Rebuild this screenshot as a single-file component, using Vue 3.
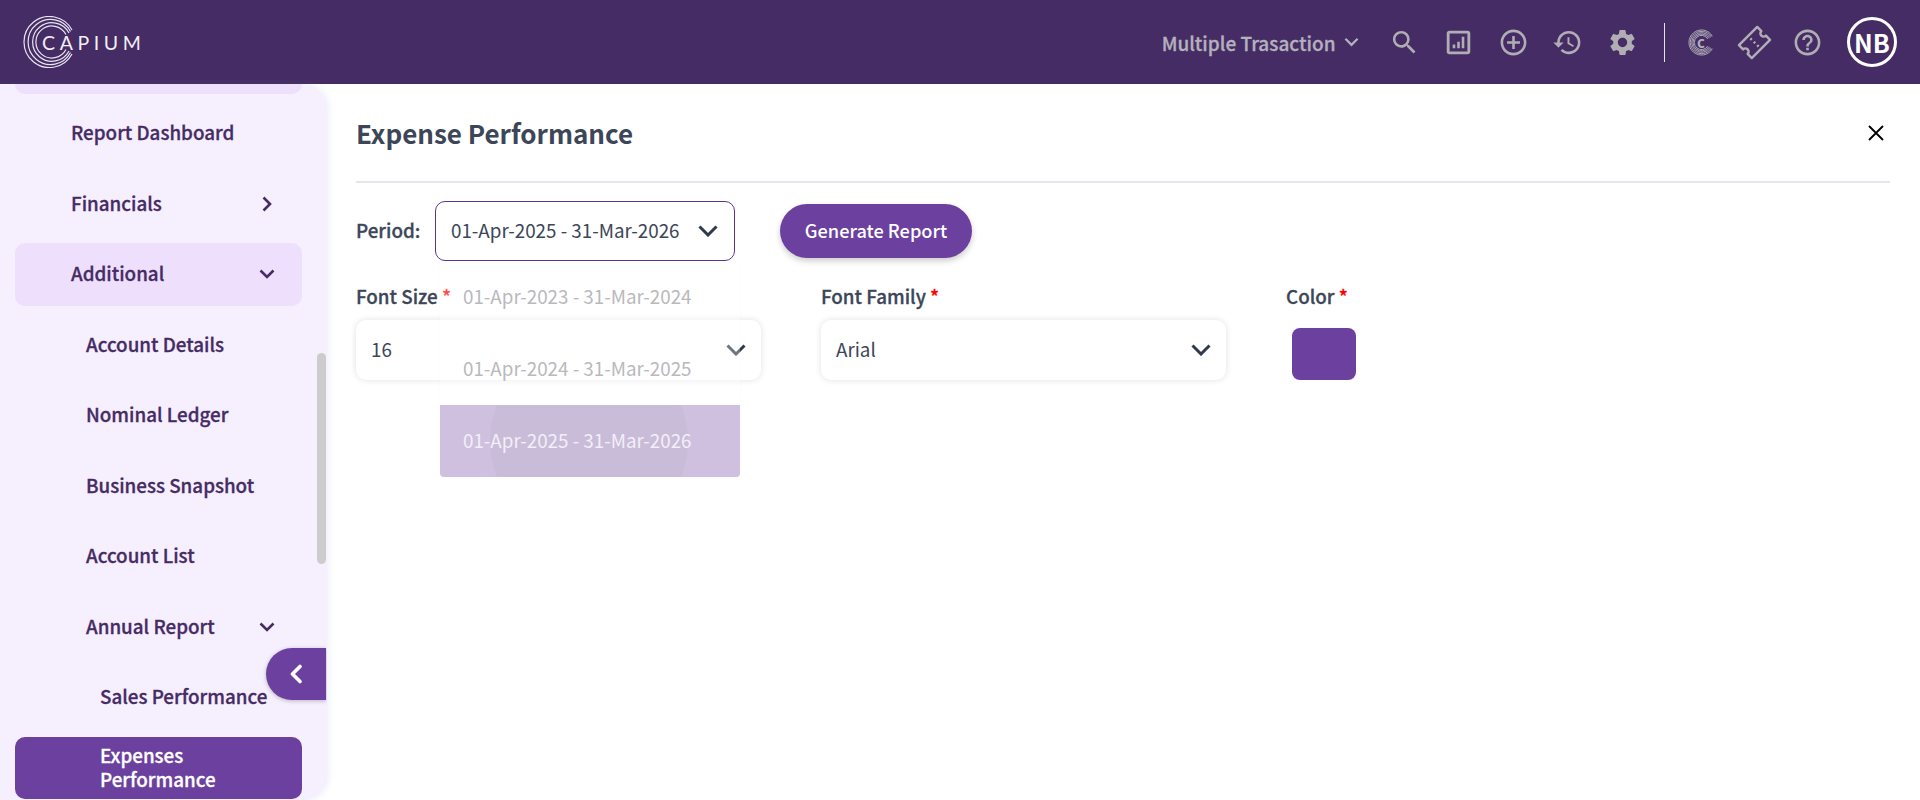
<script setup>
const periods = [
  { label: '01-Apr-2023 - 31-Mar-2024' },
  { label: '01-Apr-2024 - 31-Mar-2025' },
  { label: '01-Apr-2025 - 31-Mar-2026', selected: true }
]

const menu = [
  { label: 'Report Dashboard', level: 0 },
  { label: 'Financials', level: 0, arrow: 'right' },
  { label: 'Additional', level: 0, arrow: 'down', open: true },
  { label: 'Account Details', level: 1 },
  { label: 'Nominal Ledger', level: 1 },
  { label: 'Business Snapshot', level: 1 },
  { label: 'Account List', level: 1 },
  { label: 'Annual Report', level: 1, arrow: 'down' },
  { label: 'Sales Performance', level: 2 },
  { label: 'Expenses Performance', level: 2, active: true }
]
</script>

<template>
  <div class="page">
    <header class="topbar">
      <div class="logo">
        <svg class="logo-rings" viewBox="0 0 52 52" fill="none" stroke="#e9e3f0" stroke-width="1.2">
          <path d="M49 14A25.500 25.500 0 1 0 49 38" />
          <path d="M47.500 15.500A22.500 22.500 0 1 0 47.500 36.500" />
          <path d="M46 17A19.300 19.300 0 1 0 46 35" />
          <path d="M43 18.500A16 16 0 1 0 43 33.500" />
        </svg>
        <span class="logo-text">CAPIUM</span>
      </div>
      <div class="top-actions">
        <div class="client-switch">
          <span>Multiple Trasaction</span>
          <svg class="tool-chevron" viewBox="0 0 16 10" fill="none" stroke="#b5b0bd" stroke-width="2.400"><path d="M1.500 1.500 8 8l6.500-6.500" /></svg>
        </div>
        <svg class="tool" viewBox="0 0 24 24" fill="#b0adb5"><path d="M15.500 14h-.79l-.28-.27A6.470 6.470 0 0 0 16 9.500 6.500 6.500 0 1 0 9.500 16c1.610 0 3.090-.59 4.230-1.570l.27.28v.79l5 4.990L20.490 19l-4.990-5zm-6 0C7.010 14 5 11.990 5 9.500S7.010 5 9.500 5 14 7.010 14 9.500 11.990 14 9.500 14z" /></svg>
        <svg class="tool" viewBox="0 0 24 24" fill="none" stroke="#b0adb5"><rect x="4" y="4" width="16" height="16" rx="1" stroke-width="2.200" /><path d="M8.500 13.500v3M12 11.500v5M15.500 7.500v9" stroke-width="2" /></svg>
        <svg class="tool" viewBox="0 0 24 24" fill="#b0adb5"><path d="M13 7h-2v4H7v2h4v4h2v-4h4v-2h-4V7zm-1-5C6.480 2 2 6.480 2 12s4.480 10 10 10 10-4.480 10-10S17.520 2 12 2zm0 18c-4.410 0-8-3.590-8-8s3.590-8 8-8 8 3.590 8 8-3.590 8-8 8z" /></svg>
        <svg class="tool" viewBox="0 0 24 24" fill="#b0adb5"><path d="M13 3a9 9 0 0 0-9 9H1l3.890 3.890.07.140L9 12H6c0-3.870 3.130-7 7-7s7 3.130 7 7-3.130 7-7 7c-1.930 0-3.680-.79-4.940-2.060l-1.420 1.420A8.954 8.954 0 0 0 13 21a9 9 0 0 0 0-18zm-1 5v5l4.280 2.540.72-1.210-3.500-2.080V8H12z" /></svg>
        <svg class="tool gear" viewBox="0 0 24 24" fill="#b0adb5"><path d="M19.140 12.940c.04-.3.060-.61.060-.94 0-.32-.02-.64-.07-.94l2.030-1.580a.49.49 0 0 0 .12-.61l-1.920-3.320a.488.488 0 0 0-.59-.22l-2.390.96c-.5-.38-1.030-.7-1.620-.94l-.36-2.540a.484.484 0 0 0-.48-.41h-3.840c-.24 0-.43.170-.47.410l-.36 2.540c-.59.240-1.130.570-1.620.940l-2.390-.96c-.22-.08-.47 0-.59.220L2.740 8.870c-.12.210-.08.470.120.610l2.030 1.580c-.05.300-.09.630-.09.940s.02.640.07.940l-2.030 1.580a.49.49 0 0 0-.12.610l1.920 3.320c.12.220.37.290.59.220l2.390-.96c.5.380 1.030.7 1.620.940l.36 2.540c.05.240.24.410.48.410h3.840c.24 0 .44-.17.470-.41l.36-2.540c.59-.24 1.130-.56 1.620-.94l2.390.96c.22.080.47 0 .59-.22l1.920-3.320c.12-.22.070-.47-.12-.61l-2.010-1.580zM12 15.600A3.610 3.610 0 0 1 8.400 12c0-1.980 1.620-3.600 3.600-3.600s3.600 1.620 3.600 3.600-1.620 3.600-3.600 3.600z" /></svg>
        <span class="top-divider"></span>
        <div class="brand-mark">
          <svg viewBox="0 0 28 28" fill="none" stroke="#b0adb5" stroke-width="1">
            <path d="M25.260 7.500A13 13 0 1 0 25.260 20.500" />
            <path d="M24.050 8.200A11.600 11.600 0 1 0 24.050 19.800" />
            <path d="M22.830 8.900A10.200 10.200 0 1 0 22.830 19.100" />
            <path d="M21.620 9.600A8.800 8.800 0 1 0 21.620 18.400" />
            <path d="M20.410 10.300A7.400 7.400 0 1 0 20.410 17.700" />
          </svg>
          <span>c</span>
        </div>
        <svg class="tool ticket" viewBox="0 0 24 24" fill="none" stroke="#b0adb5" stroke-width="1.900"><path d="M2 5h20v4.500a2.500 2.500 0 0 0 0 5V19H2v-4.500a2.500 2.500 0 0 0 0-5z" stroke-linejoin="round" /><path d="M12 7.500v1.500M12 11.200v1.600M12 15v1.500" /></svg>
        <svg class="tool" viewBox="0 0 24 24" fill="#b0adb5"><path d="M11 18h2v-2h-2v2zm1-16C6.480 2 2 6.480 2 12s4.480 10 10 10 10-4.480 10-10S17.520 2 12 2zm0 18c-4.410 0-8-3.590-8-8s3.590-8 8-8 8 3.590 8 8-3.590 8-8 8zm0-14c-2.210 0-4 1.790-4 4h2c0-1.100.9-2 2-2s2 .9 2 2c0 2-3 1.750-3 5h2c0-2.250 3-2.500 3-5 0-2.210-1.790-4-4-4z" /></svg>
        <div class="avatar">NB</div>
      </div>
    </header>

    <div class="body">
      <aside class="sidebar">
        <nav class="nav">
          <div class="nav-sliver"></div>
          <a
            v-for="item in menu"
            :key="item.label"
            class="nav-item"
            :class="['level-' + item.level, { open: item.open, active: item.active }]"
          >
            <span class="nav-label">{{ item.label }}</span>
            <svg v-if="item.arrow === 'right'" class="nav-arrow" viewBox="0 0 16 16" fill="none" stroke="#452c64" stroke-width="2.600"><path d="M4.500 1.500 11 8l-6.500 6.500" /></svg>
            <svg v-if="item.arrow === 'down'" class="nav-arrow" viewBox="0 0 16 16" fill="none" stroke="#452c64" stroke-width="2.600"><path d="M1.500 4.500 8 11l6.500-6.500" /></svg>
          </a>
        </nav>
        <div class="nav-scrollbar"></div>
        <button class="collapse">
          <svg viewBox="0 0 14 20" fill="none" stroke="#fff" stroke-width="3.600" stroke-linejoin="round" stroke-linecap="round"><path d="M11 2.500 3.500 10l7.500 7.500" /></svg>
        </button>
      </aside>

      <main class="content">
        <div class="title-row">
          <h1>Expense Performance</h1>
          <svg class="close" viewBox="0 0 16 16" fill="none" stroke="#000" stroke-width="1.800"><path d="M1 1l14 14M15 1 1 15" /></svg>
        </div>

        <div class="period-row">
          <label class="period-label">Period:</label>
          <div class="period-wrap">
            <div class="period-select">
              <span class="select-text">01-Apr-2025 - 31-Mar-2026</span>
              <svg class="select-chevron" viewBox="0 0 20 12" fill="none" stroke="#2f3a4d" stroke-width="3"><path d="M1.500 1.500 10 10l8.500-8.500" /></svg>
            </div>
            <ul class="period-panel">
              <li v-for="p in periods" :key="p.label" :class="{ selected: p.selected }">
                <span class="ripple" v-if="p.selected"></span>
                <span class="option-text">{{ p.label }}</span>
              </li>
            </ul>
          </div>
          <button class="generate">Generate Report</button>
        </div>

        <div class="fields">
          <div class="field">
            <label>Font Size <em>*</em></label>
            <div class="field-select">
              <span class="select-text">16</span>
              <svg class="select-chevron" viewBox="0 0 20 12" fill="none" stroke="#2f3a4d" stroke-width="3"><path d="M1.500 1.500 10 10l8.500-8.500" /></svg>
            </div>
          </div>
          <div class="field">
            <label>Font Family <em>*</em></label>
            <div class="field-select">
              <span class="select-text">Arial</span>
              <svg class="select-chevron" viewBox="0 0 20 12" fill="none" stroke="#2f3a4d" stroke-width="3"><path d="M1.500 1.500 10 10l8.500-8.500" /></svg>
            </div>
          </div>
          <div class="field color-field">
            <label>Color <em>*</em></label>
            <div class="swatch"></div>
          </div>
        </div>
      </main>
    </div>
  </div>
</template>

<style>
html, body {
  margin: 0;
  background: #fff;
}
</style>

<style scoped>
.page {
  width: 1920px;
  height: 800px;
  overflow: hidden;
  display: flex;
  flex-direction: column;
  font-family: "Noto Sans CJK SC", "Noto Sans", sans-serif;
  color: #3c4658;
}

.topbar {
  height: 84px;
  flex: none;
  background: #452c64;
  display: flex;
  align-items: center;
  justify-content: space-between;
  padding: 0 23px 0 23px;
}

.logo {
  display: flex;
  align-items: center;
  width: 130px;
  height: 52px;
}

.logo-rings {
  width: 52px;
  height: 52px;
  flex: none;
}

.logo-text {
  margin-left: -33px;
  font-family: "Lato", sans-serif;
  font-size: 19.500px;
  letter-spacing: 4.600px;
  color: #f2eef6;
}

.top-actions {
  display: flex;
  align-items: center;
}

.client-switch {
  display: flex;
  align-items: center;
  gap: 8px;
  font-size: 19px;
  font-weight: 500;
  -webkit-text-stroke: 0.3px currentColor;
  color: #b5b0bd;
  margin-right: 30px;
}

.tool-chevron {
  width: 15px;
  height: 10px;
}

.tool {
  width: 31px;
  height: 31px;
  margin-right: 23.500px;
}

.gear {
  margin-right: 26px;
}

.ticket {
  transform: rotate(-45deg);
  margin-right: 22px;
}

.top-divider {
  width: 1px;
  height: 39px;
  background: #e6e2ea;
  margin-right: 23px;
}

.brand-mark {
  width: 27px;
  height: 27px;
  margin-right: 24px;
  position: relative;
  display: flex;
  align-items: center;
  justify-content: center;
}

.brand-mark svg {
  position: absolute;
  inset: 0;
}

.brand-mark span {
  font-size: 15px;
  font-weight: 700;
  color: #b0adb5;
  line-height: 1;
  margin-bottom: 2px;
}

.avatar {
  width: 50px;
  height: 50px;
  box-sizing: border-box;
  margin-left: 1px;
  border: 3px solid #fff;
  border-radius: 50%;
  display: flex;
  align-items: center;
  justify-content: center;
  font-size: 25px;
  font-weight: 700;
  color: #fff;
}

.body {
  flex: 1;
  display: flex;
  min-height: 0;
}

.sidebar {
  position: relative;
  width: 327px;
  flex: none;
  background: #f6effe;
  border-radius: 0 24px 24px 0;
  box-shadow: 2px 0 6px rgba(110, 130, 200, 0.12);
  overflow: hidden;
}

.nav {
  display: flex;
  flex-direction: column;
  gap: 8px;
  padding: 0 25px 0 15px;
}

.nav-sliver {
  height: 10px;
  background: #eee0fd;
  border-radius: 0 0 10px 10px;
}

.nav-item {
  height: 62.500px;
  flex: none;
  border-radius: 10px;
  display: flex;
  align-items: center;
  justify-content: space-between;
  padding-right: 26px;
  font-size: 18.800px;
  font-weight: 500;
  -webkit-text-stroke: 0.3px currentColor;
  color: #452c64;
  line-height: 24px;
  box-sizing: border-box;
}

.nav-label {
  margin-bottom: 2px;
}

.level-0 { padding-left: 56px; }
.level-1 { padding-left: 71px; }
.level-2 { padding-left: 85px; padding-right: 0; }

.nav-item.open {
  background: #eee0fd;
}

.nav-item.active {
  background: #6c409e;
  color: #fff;
  padding-right: 110px;
}

.nav-arrow {
  width: 16px;
  height: 16px;
  flex: none;
  margin-right: 1px;
}

.nav-scrollbar {
  position: absolute;
  left: 317px;
  top: 269px;
  width: 9px;
  height: 211px;
  border-radius: 5px;
  background: #cccccc;
}

.collapse {
  position: absolute;
  left: 266px;
  top: 564px;
  width: 60px;
  height: 52px;
  padding: 0;
  border: 0;
  border-radius: 26px 0 0 26px;
  background: #6c409e;
  box-shadow: 0 1px 4px rgba(0, 0, 0, 0.25);
  display: flex;
  align-items: center;
  justify-content: center;
}

.collapse svg {
  width: 14px;
  height: 20px;
}

.content {
  flex: 1;
  min-width: 0;
  padding: 0 30px 0 29px;
}

.title-row {
  height: 99px;
  box-sizing: border-box;
  border-bottom: 2px solid #e6e5ec;
  display: flex;
  align-items: center;
  justify-content: space-between;
  padding: 0 6px 0 0;
}

h1 {
  margin: 0;
  font-size: 26px;
  font-weight: 600;
  color: #3c4658;
}

.close {
  width: 16px;
  height: 16px;
}

.period-row {
  display: flex;
  align-items: center;
  margin-top: 18px;
}

.period-label {
  width: 79px;
  font-size: 18.800px;
  font-weight: 500;
  -webkit-text-stroke: 0.3px currentColor;
  margin-bottom: 3px;
}

.period-wrap {
  position: relative;
}

.period-select {
  width: 300px;
  height: 60px;
  box-sizing: border-box;
  border: 1px solid #5f3393;
  border-radius: 10px;
  display: flex;
  align-items: center;
  justify-content: space-between;
  padding: 0 16px 0 15px;
  font-size: 18.800px;
  background: #fff;
}

.select-text {
  margin-bottom: 3px;
}

.select-chevron {
  width: 20px;
  height: 12px;
  flex: none;
}

.period-panel {
  position: absolute;
  z-index: 5;
  left: 5px;
  top: 60px;
  width: 300px;
  margin: 0;
  padding: 0;
  list-style: none;
  background: rgba(255, 255, 255, 0.3);
  border-radius: 0 0 5px 5px;
  box-shadow: 0 0 3px rgba(0, 0, 0, 0.03);
}

.period-panel li {
  position: relative;
  height: 72px;
  box-sizing: border-box;
  padding-left: 23px;
  display: flex;
  align-items: center;
  overflow: hidden;
  font-size: 18.800px;
  color: #b9b9bd;
}

.period-panel li.selected {
  background: #cfc0e0;
  color: #f3eef8;
  border-radius: 0 0 4px 4px;
}

.ripple {
  position: absolute;
  left: 50px;
  top: -63px;
  width: 198px;
  height: 198px;
  border-radius: 50%;
  background: rgba(120, 130, 120, 0.06);
}

.option-text {
  position: relative;
  margin-bottom: 3px;
}

.generate {
  margin-left: 45px;
  width: 192px;
  height: 54px;
  border: 0;
  border-radius: 27px;
  background: #6c409e;
  box-shadow: 0 3px 6px rgba(0, 0, 0, 0.2);
  color: #fff;
  font-family: inherit;
  font-size: 18.200px;
  font-weight: 500;
  padding: 0 0 3px;
}

.fields {
  display: flex;
  margin-top: 22px;
}

.field {
  width: 405px;
  margin-right: 60px;
}

.field label {
  display: block;
  height: 37px;
  line-height: 25px;
  font-size: 18.800px;
  font-weight: 500;
  -webkit-text-stroke: 0.3px currentColor;
  white-space: nowrap;
}

.field em {
  font-style: normal;
  color: #f00;
}

.field-select {
  height: 60px;
  box-sizing: border-box;
  border-radius: 10px;
  background: #fff;
  box-shadow: 0 0 6px rgba(40, 40, 60, 0.14);
  display: flex;
  align-items: center;
  justify-content: space-between;
  padding: 0 15px;
  font-size: 18.800px;
}

.color-field {
  width: 100px;
  margin: 0;
}

.swatch {
  width: 64px;
  height: 52px;
  margin: 8px 0 0 6px;
  border-radius: 8px;
  background: #6c409e;
}
</style>
